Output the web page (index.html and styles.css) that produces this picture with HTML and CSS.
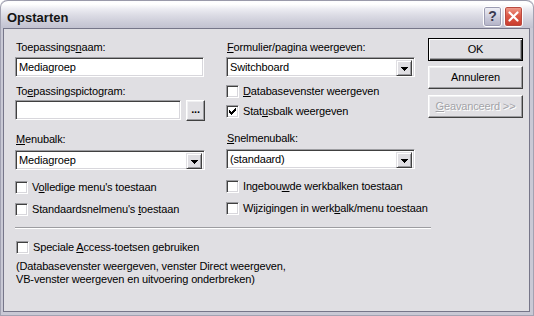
FILE: index.html
```html
<!DOCTYPE html>
<html lang="nl">
<head>
    <meta charset="UTF-8">
    <title>Opstarten</title>
    <link rel="stylesheet" href="styles.css">
</head>
<body>
    <div class="window">
        <div class="titlebar">
            <span class="title">Opstarten</span>
            <span class="tb-btn help">?</span>
            <span class="tb-btn close">
                <svg width="11" height="11" viewBox="0 0 11 11"><path d="M1.5 1.5l8 8M9.5 1.5l-8 8" stroke="#fff" stroke-width="2.2" stroke-linecap="round"/></svg>
            </span>
        </div>
        <div class="client">
            <div class="top">
                <div class="form">
                    <div class="col">
                        <div class="lbl">Toepassings<u>n</u>aam:</div>
                        <div class="field w189 m3">Mediagroep</div>
                        <div class="lbl m8">To<u>e</u>passingspictogram:</div>
                        <div class="row m2">
                            <div class="field w166"></div>
                            <button class="btn dots">...</button>
                        </div>
                        <div class="lbl m12"><u>M</u>enubalk:</div>
                        <div class="combo w190 m4">
                            <span class="val">Mediagroep</span>
                            <span class="drop"><svg width="7" height="4" viewBox="0 0 7 4"><path d="M0 0h7v1h-1v1h-1v1h-1v1h-1v-1h-1v-1h-1v-1h-1z"/></svg></span>
                        </div>
                        <label class="check m11"><span class="box"></span><span>V<u>o</u>lledige menu's toestaan</span></label>
                        <label class="check m9"><span class="box"></span><span>Standaardsnelmenu's <u>t</u>oestaan</span></label>
                    </div>
                    <div class="col">
                        <div class="lbl"><u>F</u>ormulier/pagina weergeven:</div>
                        <div class="combo w189 m3">
                            <span class="val">Switchboard</span>
                            <span class="drop"><svg width="7" height="4" viewBox="0 0 7 4"><path d="M0 0h7v1h-1v1h-1v1h-1v1h-1v-1h-1v-1h-1v-1h-1z"/></svg></span>
                        </div>
                        <label class="check m8"><span class="box"></span><span><u>D</u>atabasevenster weergeven</span></label>
                        <label class="check m7"><span class="box"><svg width="7" height="7" viewBox="0 0 7 7"><path d="M6 0h1v1h-1zM5 1h2v1h-2zM0 2h1v1h-1zM4 2h3v1h-3zM0 3h2v1h-2zM3 3h3v1h-3zM0 4h5v1h-5zM1 5h3v1h-3zM2 6h1v1h-1z"/></svg></span><span>Stat<u>u</u>sbalk weergeven</span></label>
                        <div class="lbl m14"><u>S</u>nelmenubalk:</div>
                        <div class="combo w189 m4">
                            <span class="val">(standaard)</span>
                            <span class="drop"><svg width="7" height="4" viewBox="0 0 7 4"><path d="M0 0h7v1h-1v1h-1v1h-1v1h-1v-1h-1v-1h-1v-1h-1z"/></svg></span>
                        </div>
                        <label class="check m11"><span class="box"></span><span>Ingebou<u>w</u>de werkbalken toestaan</span></label>
                        <label class="check m9"><span class="box"></span><span>Wijzigingen in werk<u>b</u>alk/menu toestaan</span></label>
                    </div>
                </div>
                <div class="buttons">
                    <button class="btn push default">OK</button>
                    <button class="btn push">Annuleren</button>
                    <button class="btn push disabled"><u>G</u>eavanceerd &gt;&gt;</button>
                </div>
            </div>
            <div class="sep"></div>
            <label class="check special"><span class="box"></span><span>Speciale <u>A</u>ccess-toetsen gebruiken</span></label>
            <p class="note">(Databasevenster weergeven, venster Direct weergeven,<br>VB-venster weergeven en uitvoering onderbreken)</p>
        </div>
    </div>
</body>
</html>
```

FILE: styles.css
```css
body {
    margin: 0;
    background: #fff;
    font-family: "Liberation Sans", Arial, sans-serif;
    font-size: 11px;
    line-height: 13px;
    letter-spacing: -0.15px;
    color: #000;
}
u {
    text-decoration: underline;
    text-underline-offset: 1px;
}
.window {
    width: 534px;
    height: 316px;
    box-sizing: border-box;
    display: flex;
    flex-direction: column;
    padding: 0 3px 3px 2px;
    background: #c9c9d5;
    border: 1px solid #a2a2b2;
    border-top: none;
    border-radius: 7px 7px 0 0;
    overflow: hidden;
}
.titlebar {
    height: 28px;
    flex: none;
    display: flex;
    align-items: flex-start;
    margin: 0 -3px 0 -2px;
    padding: 5px 0 0 6px;
    box-sizing: border-box;
    border-top: 1px solid #9a9aaa;
    border-radius: 7px 7px 0 0;
    background: linear-gradient(to bottom, #fdfdfe 0, #ffffff 3px, #ececf2 8px, #dcdce5 14px, #cdcdd9 21px, #c2c2d0 27px);
}
.title {
    flex: 1;
    font-size: 13px;
    font-weight: bold;
    line-height: 21px;
    letter-spacing: 0;
    padding-top: 1px;
    color: #141414;
}
.tb-btn {
    width: 19px;
    height: 21px;
    box-sizing: border-box;
    border: 1px solid #fff;
    border-radius: 3px;
    display: flex;
    align-items: center;
    justify-content: center;
}
.help {
    margin-right: 2px;
    background: linear-gradient(to bottom, #f2f2f8, #c8c8d8 60%, #b2b2c6);
    font-size: 14px;
    font-weight: bold;
    color: #3a3a50;
    box-shadow: inset 0 0 0 1px #9c9cb2;
}
.close {
    margin-right: 10px;
    background: linear-gradient(to bottom, #f0a090, #dd5a48 45%, #c83a2c);
    box-shadow: inset 0 0 0 1px #b84a40;
}
.client {
    flex: 1;
    background: #e0dfe3;
    border: 1px solid #767689;
    padding: 9px 0 0 11px;
}
.top {
    display: flex;
}
.form {
    display: grid;
    grid-template-columns: 190px 189px;
    column-gap: 21px;
    padding-top: 3px;
}
.col {
    display: flex;
    flex-direction: column;
    white-space: nowrap;
}
.lbl {
    height: 13px;
    padding-left: 1px;
}
.m2 { margin-top: 2px; }
.m3 { margin-top: 3px; }
.m4 { margin-top: 4px; }
.m7 { margin-top: 7px; }
.m8 { margin-top: 8px; }
.m9 { margin-top: 9px; }
.m11 { margin-top: 11px; }
.m12 { margin-top: 12px; }
.m14 { margin-top: 14px; }
.w166 { width: 166px; }
.w189 { width: 189px; }
.w190 { width: 190px; }
.field, .combo {
    height: 20px;
    box-sizing: border-box;
    background: #fff;
    border: 1px solid;
    border-color: #9d9da1 #fff #fff #9d9da1;
    box-shadow: inset 1px 1px 0 #404040, inset -1px -1px 0 #d8d7dc;
    padding: 3px 3px 0 3px;
    line-height: 13px;
}
.row {
    display: flex;
    gap: 5px;
}
.combo {
    display: flex;
    padding: 2px 2px 2px 3px;
}
.val {
    flex: 1;
    padding-top: 1px;
}
.drop {
    width: 16px;
    height: 16px;
    box-sizing: border-box;
    background: #e0dfe3;
    border: 1px solid;
    border-color: #e0dfe3 #404040 #404040 #e0dfe3;
    box-shadow: inset 1px 1px 0 #fff, inset -1px -1px 0 #9d9da1;
    display: flex;
    align-items: center;
    justify-content: center;
    padding-top: 1px;
}
.btn {
    font-family: "Liberation Sans", Arial, sans-serif;
    font-size: 11px;
    line-height: 13px;
    letter-spacing: -0.15px;
    color: #000;
    background: #e0dfe3;
    border: 1px solid;
    border-color: #fff #404040 #404040 #fff;
    box-shadow: inset -1px -1px 0 #9d9da1, inset 1px 1px 0 #f0f0f2;
    padding: 0;
    margin: 0;
}
.dots {
    width: 19px;
    height: 21px;
    font-weight: bold;
    padding-bottom: 3px;
}
.buttons {
    margin-left: 13px;
    display: flex;
    flex-direction: column;
}
.push {
    width: 95px;
    height: 23px;
    margin-bottom: 5px;
}
.default {
    border: 1px solid #000;
    box-shadow: inset 1px 1px 0 #fff, inset -1px -1px 0 #404040, inset -2px -2px 0 #9d9da1;
}
.disabled {
    margin-top: 1px;
    color: #a3a3a8;
    text-shadow: 1px 1px 0 #fff;
}
.check {
    display: flex;
    align-items: center;
    gap: 4px;
    height: 13px;
    white-space: nowrap;
}
.box {
    width: 13px;
    height: 13px;
    flex: none;
    box-sizing: border-box;
    background: #fff;
    border: 1px solid;
    border-color: #9d9da1 #fff #fff #9d9da1;
    box-shadow: inset 1px 1px 0 #404040, inset -1px -1px 0 #d8d7dc;
    display: flex;
    align-items: center;
    justify-content: center;
}
.sep {
    width: 416px;
    height: 1px;
    margin-top: 11px;
    background: #9d9da1;
    border-bottom: 1px solid #fff;
}
.special {
    margin-top: 12px;
    margin-left: 1px;
}
.note {
    margin: 6px 0 0 1px;
}
```
